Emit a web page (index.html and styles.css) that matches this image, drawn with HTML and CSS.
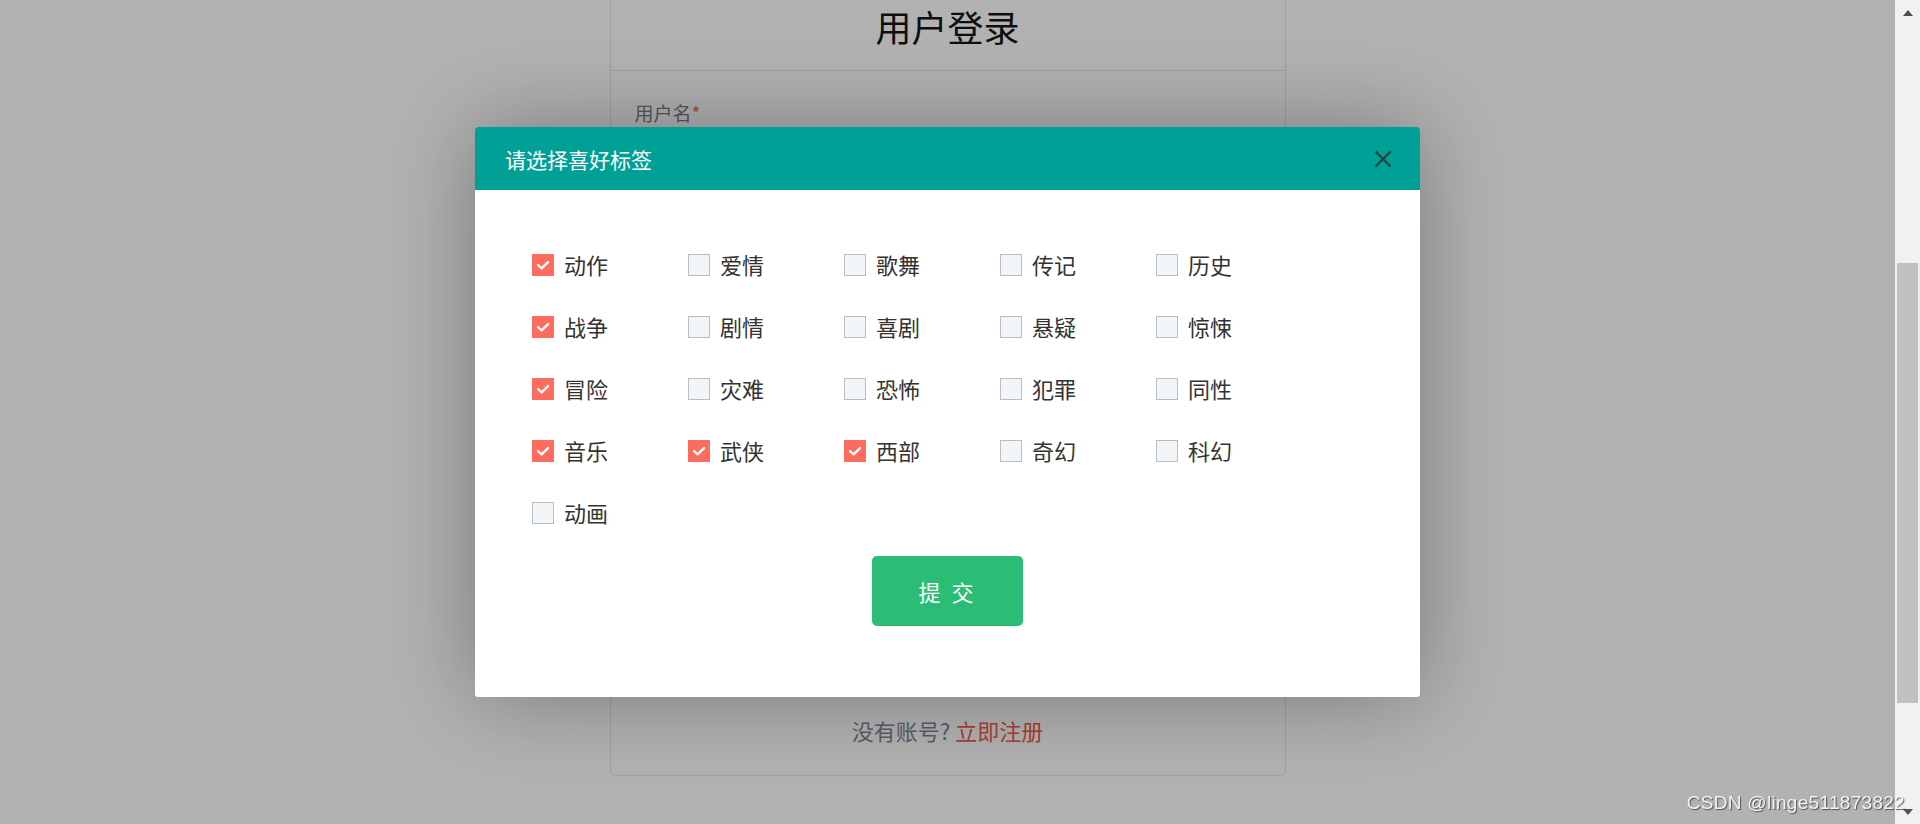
FILE: index.html
```html
<!DOCTYPE html>
<html lang="zh-CN">
<head>
<meta charset="utf-8">
<title>用户登录</title>
<link rel="stylesheet" href="styles.css">
</head>
<body>
<div class="app">
  <main class="page">
    <section class="login-card">
      <header class="card-head"><h1 class="card-title">用户登录</h1></header>
      <form class="login-form">
        <div class="field">
          <label class="field-label">用户名<span class="req">*</span></label>
          <input class="field-input" type="text">
        </div>
        <div class="field">
          <label class="field-label">密码<span class="req">*</span></label>
          <input class="field-input" type="password">
        </div>
        <button type="button" class="login-btn">登录</button>
      </form>
      <p class="card-foot">没有账号? <a class="reg-link" href="#">立即注册</a></p>
    </section>

    <div class="mask">
      <div class="dialog">
        <div class="dialog-head">
          <span class="dialog-title">请选择喜好标签</span>
          <button class="dialog-close" type="button" aria-label="关闭">
            <svg width="18" height="18" viewBox="0 0 18 18"><path d="M1.5 1.5 L16.5 16.5 M16.5 1.5 L1.5 16.5" stroke="#25403e" stroke-width="2.2" fill="none"/></svg>
          </button>
        </div>
        <div class="dialog-body">
          <div class="tag-grid">
            <label class="tag"><span class="box on"><svg viewBox="0 0 22 22"><polyline points="5.5,11 9.5,14.8 16.5,7.8"/></svg></span><span class="tag-text">动作</span></label>
            <label class="tag"><span class="box"></span><span class="tag-text">爱情</span></label>
            <label class="tag"><span class="box"></span><span class="tag-text">歌舞</span></label>
            <label class="tag"><span class="box"></span><span class="tag-text">传记</span></label>
            <label class="tag"><span class="box"></span><span class="tag-text">历史</span></label>

            <label class="tag"><span class="box on"><svg viewBox="0 0 22 22"><polyline points="5.5,11 9.5,14.8 16.5,7.8"/></svg></span><span class="tag-text">战争</span></label>
            <label class="tag"><span class="box"></span><span class="tag-text">剧情</span></label>
            <label class="tag"><span class="box"></span><span class="tag-text">喜剧</span></label>
            <label class="tag"><span class="box"></span><span class="tag-text">悬疑</span></label>
            <label class="tag"><span class="box"></span><span class="tag-text">惊悚</span></label>

            <label class="tag"><span class="box on"><svg viewBox="0 0 22 22"><polyline points="5.5,11 9.5,14.8 16.5,7.8"/></svg></span><span class="tag-text">冒险</span></label>
            <label class="tag"><span class="box"></span><span class="tag-text">灾难</span></label>
            <label class="tag"><span class="box"></span><span class="tag-text">恐怖</span></label>
            <label class="tag"><span class="box"></span><span class="tag-text">犯罪</span></label>
            <label class="tag"><span class="box"></span><span class="tag-text">同性</span></label>

            <label class="tag"><span class="box on"><svg viewBox="0 0 22 22"><polyline points="5.5,11 9.5,14.8 16.5,7.8"/></svg></span><span class="tag-text">音乐</span></label>
            <label class="tag"><span class="box on"><svg viewBox="0 0 22 22"><polyline points="5.5,11 9.5,14.8 16.5,7.8"/></svg></span><span class="tag-text">武侠</span></label>
            <label class="tag"><span class="box on"><svg viewBox="0 0 22 22"><polyline points="5.5,11 9.5,14.8 16.5,7.8"/></svg></span><span class="tag-text">西部</span></label>
            <label class="tag"><span class="box"></span><span class="tag-text">奇幻</span></label>
            <label class="tag"><span class="box"></span><span class="tag-text">科幻</span></label>

            <label class="tag"><span class="box"></span><span class="tag-text">动画</span></label>
          </div>
          <button class="submit-btn" type="button">提 交</button>
        </div>
      </div>
    </div>
  </main>

  <aside class="scrollbar">
    <div class="sb-btn"><span class="arrow-up"></span></div>
    <div class="sb-track"><div class="sb-thumb"></div></div>
    <div class="sb-btn"><span class="arrow-down"></span></div>
  </aside>
</div>
<div class="watermark">CSDN @linge511873822</div>
</body>
</html>
```

FILE: styles.css
```css
* { box-sizing: border-box; }

html, body {
  margin: 0;
  padding: 0;
  height: 100%;
  overflow: hidden;
}

body {
  font-family: "Noto Sans CJK SC", "Noto Sans", sans-serif;
  background: #ffffff;
  color: #333;
}

.app {
  display: flex;
  height: 824px;
}

.page {
  position: relative;
  flex: 1;
  overflow: hidden;
  background: #ffffff;
}

/* login card (behind mask) */
.login-card {
  width: 676px;
  margin: -17px auto 0;
  border: 1px solid #e2e5ea;
  border-radius: 6px;
  background: #fff;
}

.card-head {
  height: 87px;
  display: flex;
  align-items: center;
  justify-content: center;
  border-bottom: 1px solid #e2e5ea;
}

.card-title {
  margin: 0;
  font-size: 36px;
  font-weight: normal;
  line-height: 1.2;
  color: #151515;
}

.login-form {
  height: 627px;
  padding: 30px 24px 0;
  display: flex;
  flex-direction: column;
  gap: 24px;
}

.field {
  display: flex;
  flex-direction: column;
  gap: 8px;
}

.field-label {
  font-size: 19px;
  line-height: 24px;
  color: #7a808c;
}

.req { color: #f06a5c; }

.field-input {
  height: 44px;
  border: 1px solid #dcdfe6;
  border-radius: 4px;
}

.login-btn {
  height: 48px;
  border: 0;
  border-radius: 4px;
  background: #2bbd75;
  color: #fff;
  font-size: 18px;
}

.card-foot {
  margin: 17px 0 30px;
  text-align: center;
  font-size: 22px;
  line-height: 30px;
  color: #7e8694;
}

.reg-link {
  color: #f25a48;
  text-decoration: none;
}

/* mask + dialog */
.mask {
  position: absolute;
  inset: 0;
  background: rgba(0, 0, 0, 0.3);
  display: flex;
  align-items: center;
  justify-content: center;
}

.dialog {
  width: 945px;
  background: #fff;
  border-radius: 3px;
  box-shadow: 0 0 90px rgba(0, 0, 0, 0.32);
  overflow: hidden;
}

.dialog-head {
  height: 63px;
  background: #00a096;
  display: flex;
  align-items: center;
  justify-content: space-between;
  padding: 0 28px 0 30px;
}

.dialog-title {
  font-size: 21px;
  color: #fff;
  line-height: 28px;
}

.dialog-close {
  width: 18px;
  height: 18px;
  padding: 0;
  border: 0;
  background: none;
  display: flex;
}

.dialog-body {
  padding: 64px 0 71px 57px;
  display: flex;
  flex-direction: column;
}

.tag-grid {
  display: grid;
  grid-template-columns: repeat(5, 156px);
  row-gap: 40px;
}

.tag {
  display: flex;
  align-items: center;
  gap: 10px;
  height: 22px;
}

.box {
  width: 22px;
  height: 22px;
  border: 1px solid #b9bec4;
  background: #f3f6f9;
  display: flex;
}

.box.on {
  border-color: #fd6c5e;
  background: #fd6c5e;
}

.box svg {
  width: 20px;
  height: 20px;
}

.box polyline {
  fill: none;
  stroke: #fff;
  stroke-width: 2.6;
  stroke-linecap: round;
  stroke-linejoin: round;
}

.tag-text {
  font-size: 22px;
  line-height: 20px;
  margin-bottom: 2px;
  color: #333;
}

.submit-btn {
  align-self: center;
  margin: 32px 0 0 -57px;
  width: 151px;
  height: 70px;
  border: 0;
  border-radius: 5px;
  background: #2bbd75;
  color: #fff;
  font-family: "Noto Sans CJK SC", sans-serif;
  font-size: 22px;
  letter-spacing: 3px;
}

/* fake scrollbar */
.scrollbar {
  width: 25px;
  background: #f1f1f1;
  display: flex;
  flex-direction: column;
}

.sb-btn {
  height: 25px;
  display: flex;
  align-items: center;
  justify-content: center;
}

.arrow-up {
  width: 0;
  height: 0;
  border-left: 5.5px solid transparent;
  border-right: 5.5px solid transparent;
  border-bottom: 6px solid #505050;
}

.arrow-down {
  width: 0;
  height: 0;
  border-left: 5.5px solid transparent;
  border-right: 5.5px solid transparent;
  border-top: 6px solid #505050;
}

.sb-track {
  flex: 1;
  padding-top: 238px;
}

.sb-thumb {
  height: 440px;
  margin: 0 2px;
  background: #c1c1c1;
}

.watermark {
  position: fixed;
  right: 15px;
  bottom: 10px;
  font-family: "Liberation Sans", Arial, sans-serif;
  font-size: 19px;
  letter-spacing: 0.3px;
  color: #f2f2f2;
  text-shadow: 1px 1px 1px rgba(40, 40, 40, 0.7);
}
```
